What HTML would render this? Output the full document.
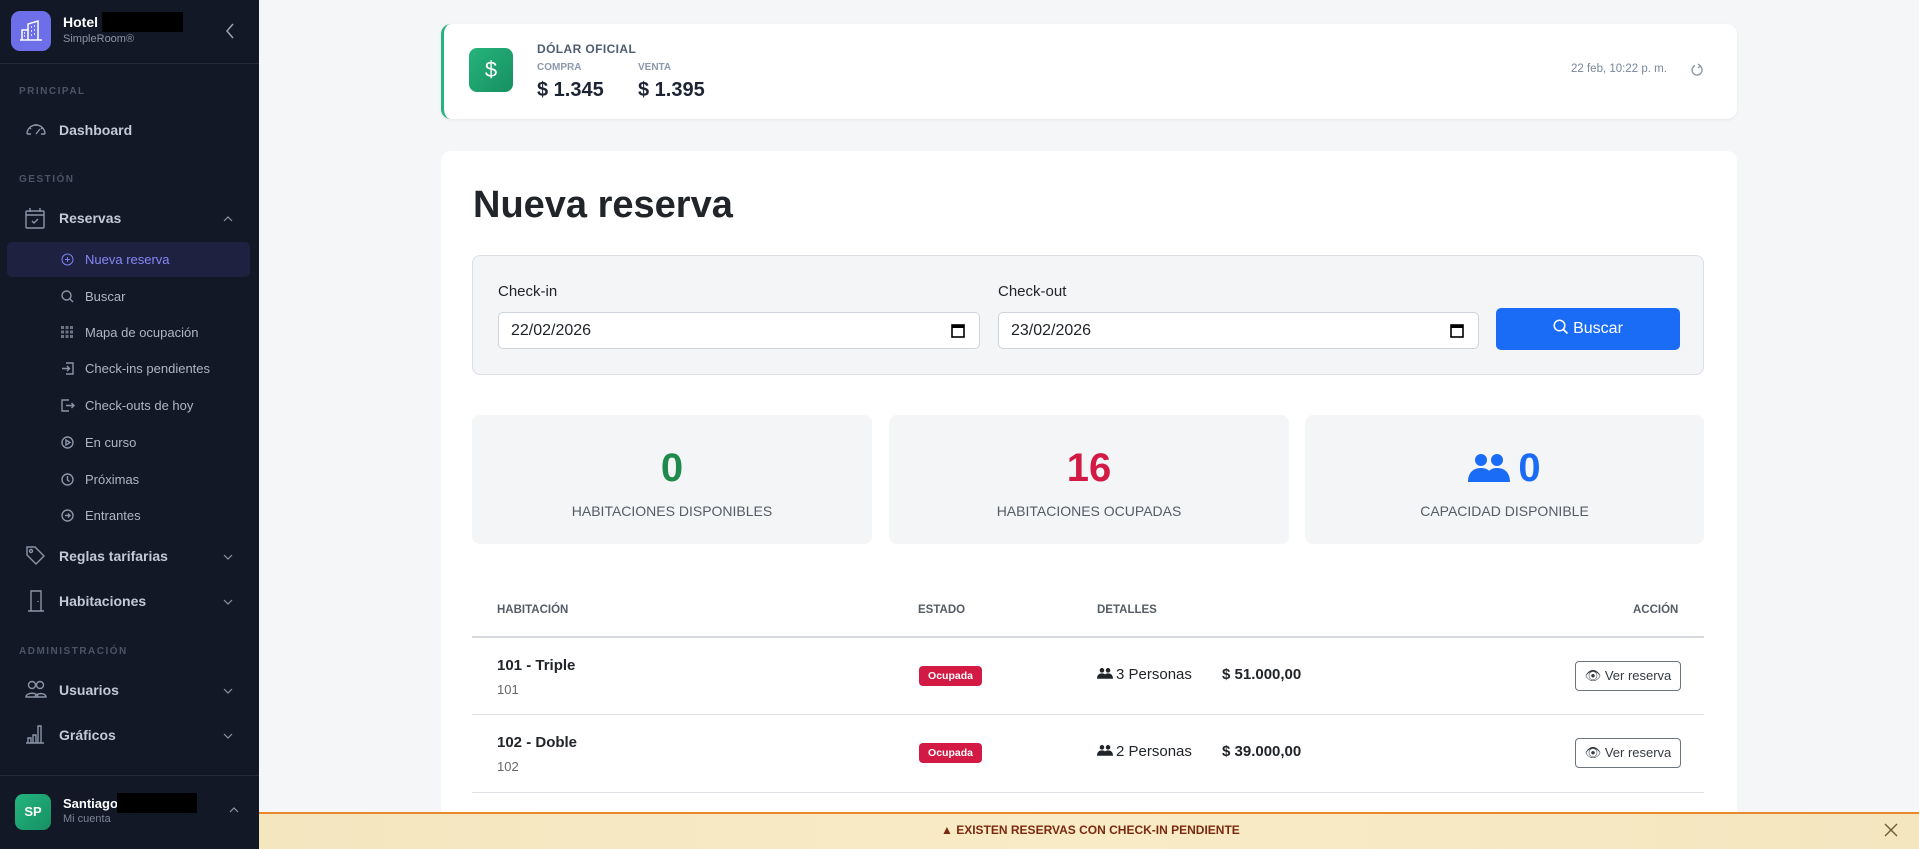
<!DOCTYPE html>
<html><head><meta charset="utf-8"><style>
*{box-sizing:border-box;margin:0;padding:0}
html,body{width:1919px;height:849px;overflow:hidden}
body{background:#f5f6f8;font-family:"Liberation Sans",sans-serif;position:relative}
.sb{position:absolute;left:0;top:0;width:259px;height:849px;background:#121826;color:#c3cad6}
.a{position:absolute}
.sec{font-size:10px;letter-spacing:1.5px;color:#4b5566;font-weight:bold;left:19px}
.item{left:59px;font-size:14px;font-weight:bold;color:#c3cad6}
.sub{left:85px;font-size:13px;color:#aeb6c4}
.ic{stroke:#8b95a6;fill:none;stroke-width:1.4}
.chev{left:222px;width:12px;height:12px}
.card{position:absolute;background:#fff;border-radius:10px}
.lbl{font-size:15px;color:#212529}
.inp{position:absolute;height:37px;background:#fff;border:1px solid #ced4da;border-radius:5px;font-size:16px;padding:9px 12px;color:#212529}
.stat{position:absolute;top:415px;height:129px;background:#f4f5f7;border-radius:8px;text-align:center}
.stat .n{font-size:40px;font-weight:bold;margin-top:30px;line-height:46px}
.stat .l{font-size:14px;color:#555c66;margin-top:12px}
.th{position:absolute;top:604px;font-size:11.5px;font-weight:bold;color:#555c66}
.hr{position:absolute;left:472px;width:1232px;height:1px;background:#dee2e6}
.badge{position:absolute;left:919px;width:63px;height:20px;background:#d21a45;color:#fff;font-size:10.5px;font-weight:bold;border-radius:4px;text-align:center;line-height:20px}
.vb{position:absolute;left:1575px;width:106px;height:30px;border:1px solid #6c757d;border-radius:4px;font-size:13px;color:#343a40;line-height:28px;text-align:center}
</style></head><body>
<div class="sb">
 <div class="a" style="left:11px;top:11px;width:40px;height:40px;border-radius:9px;background:#6d6fe8">
  <svg width="40" height="40" viewBox="0 0 40 40"><g stroke="#fff" fill="none" stroke-width="1.5"><path d="M11 29V19h6v10M17 29V13l10-3v19M9 29h22"/><path d="M20 16h1M23 15h1M20 20h1M23 19h1M20 24h1M23 23h1M13 22h1M13 25h1"/></g></svg></div>
 <div class="a" style="left:63px;top:14px;font-size:14px;font-weight:bold;color:#fff">Hotel</div>
 <div class="a" style="left:102px;top:12px;width:81px;height:20px;background:#000"></div>
 <div class="a" style="left:63px;top:33px;font-size:11px;color:#8c95a5">SimpleRoom®</div>
 <svg class="a" style="left:224px;top:22px" width="12" height="18"><path d="M9 2L3 9l6 7" stroke="#9aa3b2" fill="none" stroke-width="1.5"/></svg>
 <div class="a" style="left:0;top:63px;width:259px;height:1px;background:#242c3b"></div>
 <div class="a sec" style="top:86px">PRINCIPAL</div>
 <svg class="a ic" style="left:25px;top:119px" width="22" height="18"><path d="M2 15a9 9 0 1 1 18 0M2 15h4M16 15h4M11 15l4-5M5 9l1 1M11 5v2M17 9l-1 1"/></svg>
 <div class="a item" style="top:122px">Dashboard</div>
 <div class="a sec" style="top:174px">GESTIÓN</div>
 <svg class="a ic" style="left:25px;top:207px" width="20" height="22"><rect x="1" y="4" width="18" height="17" rx="1"/><path d="M1 8h18M5 1v4M15 1v4M7 14l2 2 4-4"/></svg>
 <div class="a item" style="top:210px">Reservas</div>
 <svg class="a chev" style="top:213px" viewBox="0 0 12 12"><path d="M2 8l4-4 4 4" stroke="#8b95a6" fill="none" stroke-width="1.2"/></svg>
 <div class="a" style="left:7px;top:242px;width:243px;height:35px;background:#1e2240;border-radius:5px"></div>
 <svg class="a" style="left:61px;top:253px" width="13" height="13"><circle cx="6.5" cy="6.5" r="5.5" stroke="#7c7ff0" fill="none"/><path d="M6.5 4v5M4 6.5h5" stroke="#7c7ff0"/></svg>
 <div class="a sub" style="top:252px;color:#8487f5">Nueva reserva</div>
 <svg class="a ic" style="left:61px;top:290px" width="13" height="13"><circle cx="5.5" cy="5.5" r="4.5"/><path d="M9 9l3 3"/></svg>
 <div class="a sub" style="top:289px">Buscar</div>
 <svg class="a" style="left:61px;top:326px" width="12" height="12"><g fill="#6b7484"><rect x="0" y="0" width="3" height="3"/><rect x="4.5" y="0" width="3" height="3"/><rect x="9" y="0" width="3" height="3"/><rect x="0" y="4.5" width="3" height="3"/><rect x="4.5" y="4.5" width="3" height="3"/><rect x="9" y="4.5" width="3" height="3"/><rect x="0" y="9" width="3" height="3"/><rect x="4.5" y="9" width="3" height="3"/><rect x="9" y="9" width="3" height="3"/></g></svg>
 <div class="a sub" style="top:325px">Mapa de ocupación</div>
 <svg class="a ic" style="left:61px;top:362px" width="13" height="13"><path d="M5 1h7v11H5M1 6.5h7M6 4l2.5 2.5L6 9"/></svg>
 <div class="a sub" style="top:361px">Check-ins pendientes</div>
 <svg class="a ic" style="left:61px;top:399px" width="14" height="13"><path d="M8 1H1v11h7M5 6.5h8M10.5 4l2.5 2.5-2.5 2.5"/></svg>
 <div class="a sub" style="top:398px">Check-outs de hoy</div>
 <svg class="a ic" style="left:61px;top:436px" width="13" height="13"><circle cx="6.5" cy="6.5" r="5.5"/><path d="M5 4v5l4-2.5z"/></svg>
 <div class="a sub" style="top:435px">En curso</div>
 <svg class="a ic" style="left:61px;top:473px" width="13" height="13"><circle cx="6.5" cy="6.5" r="5.5"/><path d="M6.5 3v4l2 1.5"/></svg>
 <div class="a sub" style="top:472px">Próximas</div>
 <svg class="a ic" style="left:61px;top:509px" width="13" height="13"><circle cx="6.5" cy="6.5" r="5.5"/><path d="M4 6.5h5M7 4.5l2 2-2 2"/></svg>
 <div class="a sub" style="top:508px">Entrantes</div>
 <svg class="a ic" style="left:25px;top:545px" width="20" height="20"><path d="M2 2h8l9 9-8 8-9-9z"/><circle cx="6" cy="6" r="1.5"/></svg>
 <div class="a item" style="top:548px">Reglas tarifarias</div>
 <svg class="a chev" style="top:551px" viewBox="0 0 12 12"><path d="M2 4l4 4 4-4" stroke="#8b95a6" fill="none" stroke-width="1.2"/></svg>
 <svg class="a ic" style="left:27px;top:590px" width="18" height="22"><path d="M1 21h16M4 21V1h10v20M11 11v1"/></svg>
 <div class="a item" style="top:593px">Habitaciones</div>
 <svg class="a chev" style="top:596px" viewBox="0 0 12 12"><path d="M2 4l4 4 4-4" stroke="#8b95a6" fill="none" stroke-width="1.2"/></svg>
 <div class="a sec" style="top:646px">ADMINISTRACIÓN</div>
 <svg class="a ic" style="left:25px;top:680px" width="22" height="18"><circle cx="7" cy="5" r="3.5"/><circle cx="15" cy="5" r="3.5"/><path d="M1 17c0-5 12-5 12 0zM10 17c0-4 11-5 11 0z"/></svg>
 <div class="a item" style="top:682px">Usuarios</div>
 <svg class="a chev" style="top:685px" viewBox="0 0 12 12"><path d="M2 4l4 4 4-4" stroke="#8b95a6" fill="none" stroke-width="1.2"/></svg>
 <svg class="a ic" style="left:25px;top:724px" width="20" height="20"><path d="M1 19h18M3 19v-5h3v5M8 19v-8h3v8M13 19V2h3v17"/></svg>
 <div class="a item" style="top:727px">Gráficos</div>
 <svg class="a chev" style="top:730px" viewBox="0 0 12 12"><path d="M2 4l4 4 4-4" stroke="#8b95a6" fill="none" stroke-width="1.2"/></svg>
 <div class="a" style="left:0;top:775px;width:259px;height:1px;background:#242c3b"></div>
 <div class="a" style="left:15px;top:794px;width:36px;height:36px;border-radius:8px;background:linear-gradient(135deg,#24b47e,#169064);color:#fff;font-weight:bold;font-size:13px;text-align:center;line-height:36px">SP</div>
 <div class="a" style="left:63px;top:796px;font-size:13px;font-weight:bold;color:#fff">Santiago</div>
 <div class="a" style="left:117px;top:793px;width:80px;height:20px;background:#000"></div>
 <div class="a" style="left:63px;top:813px;font-size:11px;color:#7c8596">Mi cuenta</div>
 <svg class="a" style="left:228px;top:805px" width="12" height="10"><path d="M2 7l4-4 4 4" stroke="#8b95a6" fill="none" stroke-width="1.2"/></svg>
</div>

<div class="card" style="left:441px;top:24px;width:1296px;height:95px;border-left:3px solid #27b37b;box-shadow:0 1px 3px rgba(0,0,0,.06)"></div>
<div class="a" style="left:469px;top:48px;width:44px;height:44px;border-radius:8px;background:linear-gradient(135deg,#26b47b,#178f60);color:#fff;font-size:22px;text-align:center;line-height:44px">$</div>
<div class="a" style="left:537px;top:42px;font-size:12px;font-weight:bold;color:#4f5b70;letter-spacing:.4px">DÓLAR OFICIAL</div>
<div class="a" style="left:537px;top:62px;font-size:10px;font-weight:bold;color:#8c98ac">COMPRA</div>
<div class="a" style="left:638px;top:62px;font-size:10px;font-weight:bold;color:#8c98ac">VENTA</div>
<div class="a" style="left:537px;top:79px;font-size:20px;font-weight:bold;color:#1c2333">$ 1.345</div>
<div class="a" style="left:638px;top:79px;font-size:20px;font-weight:bold;color:#1c2333">$ 1.395</div>
<div class="a" style="left:1571px;top:63px;font-size:11.5px;color:#7a869b">22 feb, 10:22 p. m.</div>
<svg class="a" style="left:1690px;top:63px" width="14" height="14"><path d="M10 3a5 5 0 1 1-5-.5" stroke="#8793a6" fill="none" stroke-width="1.3"/><path d="M8 1l2.5 2L8 5" stroke="#8793a6" fill="none" stroke-width="1.3"/></svg>

<div class="card" style="left:441px;top:151px;width:1296px;height:698px;border-radius:10px 10px 0 0"></div>
<div class="a" style="left:473px;top:184px;font-size:38px;font-weight:bold;color:#212529">Nueva reserva</div>
<div class="a" style="left:472px;top:255px;width:1232px;height:120px;background:#f4f5f7;border:1px solid #dcdfe3;border-radius:8px"></div>
<div class="a lbl" style="left:498px;top:283px">Check-in</div>
<div class="a lbl" style="left:998px;top:283px">Check-out</div>
<div class="inp" style="left:498px;top:312px;width:482px">22/02/2026</div>
<div class="inp" style="left:998px;top:312px;width:481px">23/02/2026</div>
<svg class="a" style="left:951px;top:323px" width="14" height="15"><rect x="1" y="2" width="12" height="12" stroke="#000" fill="none" stroke-width="1.6"/><rect x="1" y="2" width="12" height="3" fill="#000"/></svg>
<svg class="a" style="left:1450px;top:323px" width="14" height="15"><rect x="1" y="2" width="12" height="12" stroke="#000" fill="none" stroke-width="1.6"/><rect x="1" y="2" width="12" height="3" fill="#000"/></svg>
<div class="a" style="left:1496px;top:308px;width:184px;height:42px;background:#1a6cf6;border-radius:5px;color:#fff;font-size:16px;text-align:center;line-height:42px"><svg width="16" height="16" style="vertical-align:-2px;margin-right:4px"><circle cx="6.5" cy="6.5" r="5.3" stroke="#fff" fill="none" stroke-width="1.5"/><path d="M10.5 10.5l4 4" stroke="#fff" stroke-width="1.7"/></svg>Buscar</div>

<div class="stat" style="left:472px;width:400px"><div class="n" style="color:#1f8a4c">0</div><div class="l">HABITACIONES DISPONIBLES</div></div>
<div class="stat" style="left:889px;width:400px"><div class="n" style="color:#d21a45">16</div><div class="l">HABITACIONES OCUPADAS</div></div>
<div class="stat" style="left:1305px;width:399px"><div class="n" style="color:#1a6cf6"><svg width="42" height="30" style="vertical-align:-1px;margin-right:8px" viewBox="0 0 42 30"><g fill="#1a6cf6"><circle cx="13" cy="8" r="6"/><circle cx="29" cy="8" r="6"/><path d="M0 30c0-10 6-14 13-14s12 4 12 14zM17 30c1-10 5-14 12-14s13 4 13 14z"/></g></svg>0</div><div class="l">CAPACIDAD DISPONIBLE</div></div>

<div class="th" style="left:497px">HABITACIÓN</div>
<div class="th" style="left:918px">ESTADO</div>
<div class="th" style="left:1097px">DETALLES</div>
<div class="th" style="left:1633px">ACCIÓN</div>
<div class="hr" style="top:636px;height:2px;background:#d6dadf"></div>

<div class="a" style="left:497px;top:657px;font-size:15px;font-weight:bold;color:#212529">101 - Triple</div>
<div class="a" style="left:497px;top:682px;font-size:13px;color:#666">101</div>
<div class="badge" style="top:666px">Ocupada</div>
<div class="a" style="left:1097px;top:666px;font-size:15px;color:#212529"><svg width="16" height="12" viewBox="0 0 42 30" style="margin-right:3px"><g fill="#212529"><circle cx="13" cy="8" r="6"/><circle cx="29" cy="8" r="6"/><path d="M0 30c0-10 6-14 13-14s12 4 12 14zM17 30c1-10 5-14 12-14s13 4 13 14z"/></g></svg>3 Personas</div>
<div class="a" style="left:1222px;top:666px;font-size:15px;font-weight:bold;color:#212529">$ 51.000,00</div>
<div class="vb" style="top:661px">👁&#xFE0E; Ver reserva</div>
<div class="hr" style="top:714px"></div>

<div class="a" style="left:497px;top:734px;font-size:15px;font-weight:bold;color:#212529">102 - Doble</div>
<div class="a" style="left:497px;top:759px;font-size:13px;color:#666">102</div>
<div class="badge" style="top:743px">Ocupada</div>
<div class="a" style="left:1097px;top:743px;font-size:15px;color:#212529"><svg width="16" height="12" viewBox="0 0 42 30" style="margin-right:3px"><g fill="#212529"><circle cx="13" cy="8" r="6"/><circle cx="29" cy="8" r="6"/><path d="M0 30c0-10 6-14 13-14s12 4 12 14zM17 30c1-10 5-14 12-14s13 4 13 14z"/></g></svg>2 Personas</div>
<div class="a" style="left:1222px;top:743px;font-size:15px;font-weight:bold;color:#212529">$ 39.000,00</div>
<div class="vb" style="top:738px">👁&#xFE0E; Ver reserva</div>
<div class="hr" style="top:792px"></div>

<div class="a" style="left:259px;top:812px;width:1660px;height:37px;background:linear-gradient(90deg,#f4e6bf,#f8ebc6 50%,#f4e6bf);border-top:2px solid #e8892f"></div>
<div class="a" style="left:941px;top:823px;font-size:12px;font-weight:bold;color:#7a2a12">▲ EXISTEN RESERVAS CON CHECK-IN PENDIENTE</div>
<svg class="a" style="left:1884px;top:823px" width="14" height="14"><path d="M1 1l12 12M13 1L1 13" stroke="#6b5a3a" stroke-width="1.4"/></svg>
</body></html>
